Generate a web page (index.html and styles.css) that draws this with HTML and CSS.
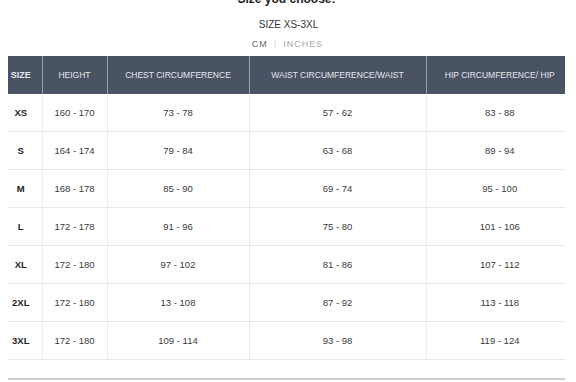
FILE: index.html
```html
<!DOCTYPE html>
<html>
<head>
<meta charset="utf-8">
<link rel="stylesheet" href="styles.css">
</head>
<body>
<div class="page">
  <h2 class="lead">Size you choose:</h2>
  <div class="range">SIZE XS-3XL</div>
  <div class="units"><span class="unit active">CM</span><span class="sep">|</span><span class="unit">INCHES</span></div>
  <table class="chart">
    <colgroup>
      <col class="c-size"><col class="c-height"><col class="c-chest"><col class="c-waist"><col class="c-hip">
    </colgroup>
    <thead>
      <tr><th class="size">SIZE</th><th>HEIGHT</th><th>CHEST CIRCUMFERENCE</th><th>WAIST CIRCUMFERENCE/WAIST</th><th class="hip">HIP CIRCUMFERENCE/ HIP</th></tr>
    </thead>
    <tbody>
      <tr><td class="size">XS</td><td>160 - 170</td><td>73 - 78</td><td>57 - 62</td><td class="hip">83 - 88</td></tr>
      <tr><td class="size">S</td><td>164 - 174</td><td>79 - 84</td><td>63 - 68</td><td class="hip">89 - 94</td></tr>
      <tr><td class="size">M</td><td>168 - 178</td><td>85 - 90</td><td>69 - 74</td><td class="hip">95 - 100</td></tr>
      <tr><td class="size">L</td><td>172 - 178</td><td>91 - 96</td><td>75 - 80</td><td class="hip">101 - 106</td></tr>
      <tr><td class="size">XL</td><td>172 - 180</td><td>97 - 102</td><td>81 - 86</td><td class="hip">107 - 112</td></tr>
      <tr><td class="size">2XL</td><td>172 - 180</td><td>13 - 108</td><td>87 - 92</td><td class="hip">113 - 118</td></tr>
      <tr><td class="size">3XL</td><td>172 - 180</td><td>109 - 114</td><td>93 - 98</td><td class="hip">119 - 124</td></tr>
    </tbody>
  </table>
  <div class="rule"></div>
</div>
</body>
</html>
```
FILE: styles.css
```css
html, body {
  margin: 0;
  padding: 0;
  background: #ffffff;
}
body {
  font-family: "Liberation Sans", Arial, sans-serif;
  color: #333333;
  overflow: hidden;
}
.page {
  width: 576px;
  height: 382px;
  box-sizing: border-box;
  padding-left: 8px;
  display: flex;
  flex-direction: column;
  overflow: hidden;
}
.lead {
  margin: -8px 0 0 0;
  width: 557px;
  text-align: center;
  font-size: 12px;
  line-height: 14px;
  font-weight: bold;
  color: #222222;
}
.range {
  margin-top: 13px;
  width: 557px;
  text-align: center;
  font-size: 10px;
  line-height: 12px;
  color: #333333;
  padding-left: 4px;
  box-sizing: border-box;
}
.units {
  margin-top: 7px;
  width: 557px;
  font-size: 9px;
  line-height: 12px;
  letter-spacing: 1px;
  display: flex;
  justify-content: center;
  gap: 6px;
  padding-left: 2px;
  box-sizing: border-box;
}
.unit { color: #a8a8a8; }
.unit.active { color: #666666; }
.sep { color: #d4d4d4; }
.chart {
  margin-top: 6px;
  width: 557px;
  border-collapse: collapse;
  table-layout: fixed;
}
.c-size { width: 34px; }
.c-height { width: 65px; }
.c-chest { width: 142px; }
.c-waist { width: 177px; }
.c-hip { width: 139px; }
.chart th {
  height: 38px;
  padding: 0;
  background: #4a5364;
  color: #e4e7eb;
  font-weight: normal;
  font-size: 8.5px;
  text-align: center;
  border-left: 1px solid #97a0ab;
}
.chart th:first-child { border-left: none; }
.chart th.size {
  font-weight: bold;
  font-size: 9px;
  padding-right: 8px;
}
.chart th.hip, .chart td.hip { padding-left: 8px; }
.chart td {
  height: 37px;
  padding: 0;
  font-size: 9.5px;
  color: #3a3a3a;
  text-align: center;
  border-left: 1px solid #ececec;
  border-bottom: 1px solid #e8e8e8;
}
.chart td:first-child { border-left: none; }
.chart td.size {
  font-weight: bold;
  color: #1e1e1e;
  padding-right: 8px;
}
.rule {
  margin-top: 18px;
  width: 557px;
  height: 2px;
  background: #cfcfcf;
}
```
